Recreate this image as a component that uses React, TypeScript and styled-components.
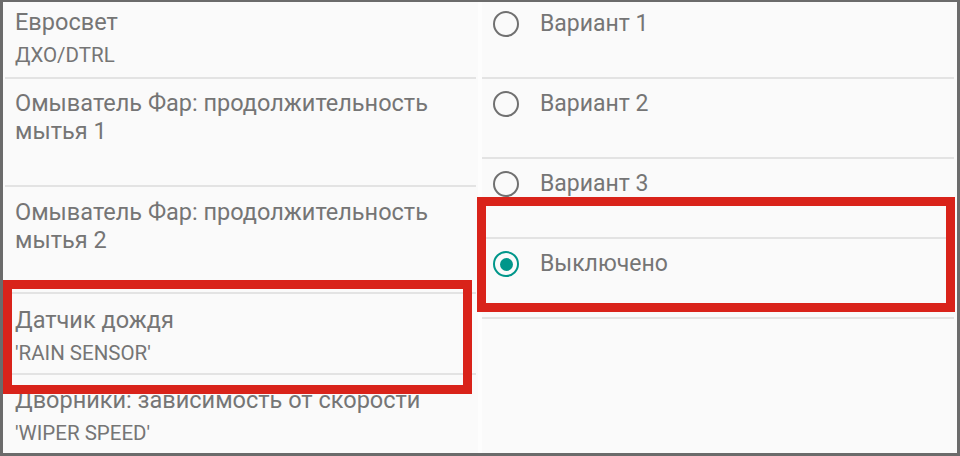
import React from "react";
import styled, { createGlobalStyle } from "styled-components";

const GlobalStyle = createGlobalStyle`
  html, body {
    margin: 0;
    padding: 0;
    background: #ffffff;
  }
  body {
    font-family: Roboto, "Noto Sans", "DejaVu Sans", sans-serif;
  }
`;

const TEXT = "#757575";
const DIVIDER = "#e3e3e3";
const RED = "#d9231a";
const TEAL = "#00968a";

const settings = [
  { title: "Евросвет", sub: "ДХО/DTRL", top: 6, height: 75 },
  { title: "Омыватель Фар: продолжительность мытья 1", top: 10, height: 106 },
  { title: "Омыватель Фар: продолжительность мытья 2", top: 11, height: 105 },
  { title: "Датчик дождя", sub: "'RAIN SENSOR'", top: 12, height: 79 },
  { title: "Дворники: зависимость от скорости", sub: "'WIPER SPEED'", top: 11 },
];

const options = [
  { label: "Вариант 1", top: 9, height: 75 },
  { label: "Вариант 2", top: 12, height: 78 },
  { label: "Вариант 3", top: 12, height: 78 },
  { label: "Выключено", top: 12, height: 78, checked: true },
];

const Frame = styled.div`
  position: relative;
  box-sizing: border-box;
  width: 960px;
  height: 456px;
  border: 3px solid #6b6b6b;
  border-top-width: 2px;
  background: #fdfdfd;
  display: flex;
  gap: 4px;
  overflow: hidden;
`;

const Panel = styled.div<{ $width: number }>`
  width: ${(p) => p.$width}px;
  display: flex;
  flex-direction: column;
  background: #fafafa;
`;

const SettingRow = styled.div<{ $top: number; $height?: number; $last?: boolean }>`
  padding: ${(p) => p.$top}px 12px 0 10px;
  height: ${(p) => (p.$height ? `${p.$height - p.$top}px` : "auto")};
  flex: ${(p) => (p.$last ? "1" : "none")};
  border-bottom: ${(p) => (p.$last ? "none" : `2px solid ${DIVIDER}`)};
  margin: 0 2px;
`;

const Title = styled.div`
  font-size: 23.5px;
  line-height: 28px;
  color: ${TEXT};
  padding-right: 12px;
`;

const Sub = styled.div`
  font-size: 20.5px;
  line-height: 24px;
  margin-top: 7px;
  color: ${TEXT};
`;

const OptionRow = styled.div<{ $top: number; $height: number }>`
  display: flex;
  align-items: flex-start;
  gap: 21px;
  height: ${(p) => p.$height - p.$top}px;
  padding: ${(p) => p.$top}px 12px 0 11px;
  border-bottom: 2px solid ${DIVIDER};
  margin-right: 3px;
`;

const Radio = styled.span<{ $checked?: boolean }>`
  box-sizing: border-box;
  flex: none;
  width: 26px;
  height: 26px;
  border-radius: 50%;
  border: 2.5px solid ${(p) => (p.$checked ? TEAL : "#707070")};
  display: flex;
  align-items: center;
  justify-content: center;

  &::after {
    content: "";
    display: ${(p) => (p.$checked ? "block" : "none")};
    width: 13px;
    height: 13px;
    border-radius: 50%;
    background: ${TEAL};
  }
`;

const OptionLabel = styled.span`
  font-size: 23px;
  line-height: 26px;
  color: ${TEXT};
`;

const Highlight = styled.div<{ $x: number; $y: number; $w: number; $h: number }>`
  position: absolute;
  box-sizing: border-box;
  left: ${(p) => p.$x}px;
  top: ${(p) => p.$y}px;
  width: ${(p) => p.$w}px;
  height: ${(p) => p.$h}px;
  border: 9px solid ${RED};
  pointer-events: none;
`;

export default function App() {
  return (
    <>
      <GlobalStyle />
      <Frame>
        <Panel $width={475}>
          {settings.map((s, i) => (
            <SettingRow
              key={s.title}
              $top={s.top}
              $height={s.height}
              $last={i === settings.length - 1}
            >
              <Title>{s.title}</Title>
              {s.sub && <Sub>{s.sub}</Sub>}
            </SettingRow>
          ))}
        </Panel>
        <Panel $width={475}>
          {options.map((o) => (
            <OptionRow key={o.label} $top={o.top} $height={o.height}>
              <Radio $checked={o.checked} />
              <OptionLabel>{o.label}</OptionLabel>
            </OptionRow>
          ))}
        </Panel>
        <Highlight $x={0} $y={278} $w={469} $h={114} />
        <Highlight $x={474} $y={195} $w={478} $h={115} />
      </Frame>
    </>
  );
}
